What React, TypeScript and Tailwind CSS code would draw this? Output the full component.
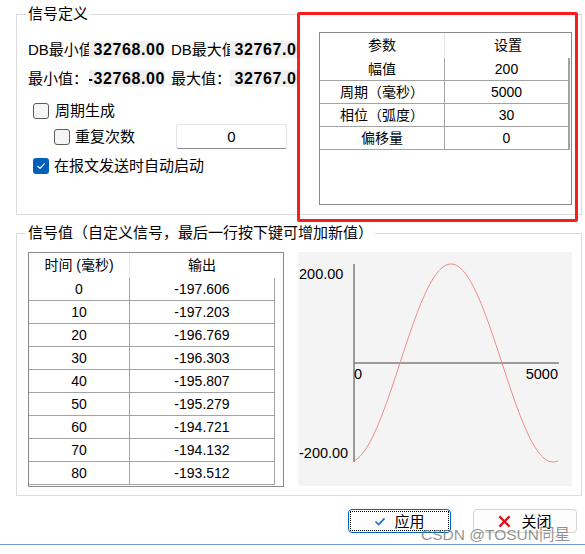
import React from 'react';

const paramRows = [
  ['幅值', '200'],
  ['周期（毫秒）', '5000'],
  ['相位（弧度）', '30'],
  ['偏移量', '0'],
];

const signalRows = [
  ['0', '-197.606'],
  ['10', '-197.203'],
  ['20', '-196.769'],
  ['30', '-196.303'],
  ['40', '-195.807'],
  ['50', '-195.279'],
  ['60', '-194.721'],
  ['70', '-194.132'],
  ['80', '-193.512'],
];

function Checkbox({ checked }: { checked?: boolean }) {
  if (checked) {
    return (
      <span className="flex h-4 w-4 shrink-0 items-center justify-center rounded-[3px] bg-[#005fb8]">
        <svg viewBox="0 0 16 16" className="h-4 w-4">
          <path d="M4.8 8.4 L7 10.4 L11.2 5.8" fill="none" stroke="white" strokeWidth="1.2" strokeLinecap="round" strokeLinejoin="round" />
        </svg>
      </span>
    );
  }
  return <span className="h-4 w-4 shrink-0 rounded-[3px] border border-[#5c5c5c] bg-[#f5f5f5]" />;
}

function ValueBox({ value }: { value: string }) {
  return (
    <div className="flex h-[17px] w-[76px] shrink-0 items-center justify-end overflow-hidden whitespace-nowrap bg-[#f0f0f0] text-[16px] font-bold leading-none tracking-[0.6px] text-black">
      {value}
    </div>
  );
}

function Label({ text, w }: { text: string; w: string }) {
  return <div className={`${w} shrink-0 overflow-hidden whitespace-nowrap text-[15px] leading-[17px]`}>{text}</div>;
}

function Chart() {
  // 5000 ms across ~204 px, amplitude 200 -> 99 px
  const pts: string[] = [];
  for (let i = 0; i <= 204; i++) {
    const v = -200 * Math.cos((2 * Math.PI * i) / 204 + 0.155);
    pts.push(`${i === 0 ? 'M' : 'L'}${(56 + i).toFixed(1)} ${(111 - v * 0.495).toFixed(2)}`);
  }
  return (
    <div className="h-[234px] w-[274px] shrink-0 bg-[#f4f4f4]">
      <svg width="274" height="234" viewBox="0 0 274 234" className="block">
        <line x1="56" y1="12" x2="56" y2="210" stroke="#7d7d7d" strokeWidth="1.5" />
        <line x1="56" y1="111" x2="261" y2="111" stroke="#7d7d7d" strokeWidth="1.5" />
        <path d={pts.join(' ')} fill="none" stroke="#f28a8a" strokeWidth="1" />
        <text x="1" y="27" fontSize="14.5" fontFamily="Liberation Sans, sans-serif" fill="#000">200.00</text>
        <text x="1" y="206" fontSize="14.5" fontFamily="Liberation Sans, sans-serif" fill="#000">-200.00</text>
        <text x="56" y="127" fontSize="14.5" fontFamily="Liberation Sans, sans-serif" fill="#000">0</text>
        <text x="260" y="127" fontSize="14.5" textAnchor="end" fontFamily="Liberation Sans, sans-serif" fill="#000">5000</text>
      </svg>
    </div>
  );
}

export default function App() {
  return (
    <div className="relative h-[554px] w-[585px] overflow-hidden bg-white pt-[6px] font-['Liberation_Sans','Noto_Sans_CJK_SC',sans-serif] text-black">
      {/* 信号定义 */}
      <fieldset className="ml-[16px] h-[209px] w-[566px] border border-[#dcdcdc]">
        <legend className="ml-[9px] px-[2px] text-[15px] leading-[16px]">信号定义</legend>
        <div className="flex">
          <div className="w-[283px] shrink-0 overflow-hidden pl-[11px]">
            <div className="mt-[19px] flex items-center">
              <Label text="DB最小值" w="w-[61px]" />
              <ValueBox value="32768.00" />
              <div className="w-[6px] shrink-0" />
              <Label text="DB最大值" w="w-[59px]" />
              <ValueBox value="32767.00" />
            </div>
            <div className="mt-[12px] flex items-center">
              <Label text="最小值：" w="w-[61px]" />
              <ValueBox value="-32768.00" />
              <div className="w-[6px] shrink-0" />
              <Label text="最大值：" w="w-[59px]" />
              <ValueBox value="32767.00" />
            </div>
            <div className="ml-[5px] mt-[16px] flex items-center gap-[6px] text-[15px] leading-4">
              <Checkbox />
              <span>周期生成</span>
            </div>
            <div className="ml-[26px] mt-[5px] flex items-center gap-[5px] text-[15px] leading-4">
              <Checkbox />
              <span className="w-[96px] shrink-0">重复次数</span>
              <div className="flex h-[25px] w-[111px] shrink-0 items-center justify-center rounded-[3px] border border-[#e3e3e3] border-b-[#8a8a8a] bg-white text-[15px]">
                0
              </div>
            </div>
            <div className="ml-[5px] mt-[9px] flex items-center gap-[5px] text-[15px] leading-4">
              <Checkbox checked />
              <span>在报文发送时自动启动</span>
            </div>
          </div>

          <div className="ml-[19px] mt-[10px] h-[173px] w-[253px] shrink-0 border border-[#8a8a8a] text-[14px]">
            <div className="flex h-[25px] items-center">
              <div className="flex h-full w-[125px] items-center justify-center border-r border-[#e4e4e4]">参数</div>
              <div className="flex h-full flex-1 items-center justify-center">设置</div>
            </div>
            {paramRows.map(([k, v]) => (
              <div key={k} className="flex h-[23px] w-[250px] border-b border-[#a3a3a3]">
                <div className="flex w-[125px] items-center justify-center border-r border-[#a3a3a3]">{k}</div>
                <div className="flex w-[125px] items-center justify-center border-r-2 border-[#a3a3a3]">{v}</div>
              </div>
            ))}
          </div>
        </div>
      </fieldset>

      {/* 信号值 */}
      <fieldset className="ml-[16px] mt-[10px] h-[271px] w-[566px] border border-[#dcdcdc]">
        <legend className="ml-[9px] px-[2px] text-[15px] leading-[16px]">信号值（自定义信号，最后一行按下键可增加新值）</legend>
        <div className="flex gap-[14px] pl-[11px] pt-[11px]">
          <div className="h-[235px] w-[256px] shrink-0 border border-[#8a8a8a] text-[14px]">
            <div className="flex h-[25px] items-center">
              <div className="flex h-full w-[101px] items-center justify-center border-r border-[#e4e4e4]">时间 (毫秒)</div>
              <div className="flex h-full w-[144px] items-center justify-center">输出</div>
            </div>
            {signalRows.map(([t, v]) => (
              <div key={t} className="flex h-[23px] w-[246px] border-b border-[#a3a3a3]">
                <div className="flex w-[101px] items-center justify-center border-r border-[#a3a3a3]">{t}</div>
                <div className="flex w-[145px] items-center justify-center border-r border-[#a3a3a3]">{v}</div>
              </div>
            ))}
          </div>
          <Chart />
        </div>
      </fieldset>

      {/* buttons */}
      <div className="mt-[13px] flex justify-end gap-[22px] pr-[8px]">
        <button className="relative flex h-[24px] w-[103px] items-center justify-center gap-[8px] rounded-[4px] border border-[#0067c0] bg-[#fdfdfd] text-[15px] leading-none">
          <span className="pointer-events-none absolute inset-[1px] border border-dotted border-black" />
          <svg viewBox="0 0 12 10" className="h-[9px] w-[12px]">
            <path d="M1 5 L4.5 8.5 L11 1.5" fill="none" stroke="#1a73cf" strokeWidth="1.8" />
          </svg>
          <span>应用</span>
        </button>
        <button className="flex h-[24px] w-[104px] items-center justify-center gap-[10px] rounded-[4px] border border-[#d4d4d4] bg-[#fdfdfd] text-[15px] leading-none">
          <svg viewBox="0 0 14 14" className="h-[13px] w-[13px]">
            <path d="M1.5 1.5 L12.5 12.5 M12.5 1.5 L1.5 12.5" fill="none" stroke="#e0101c" strokeWidth="2.4" />
          </svg>
          <span>关闭</span>
        </button>
      </div>

      <div className="mt-[11px] h-[1px] w-full bg-[#6b9ad6]" />

      {/* annotation */}
      <div className="pointer-events-none absolute left-[297px] top-[12px] h-[210px] w-[281px] rounded-[2px] border-[3px] border-[#fb1c1c]" />
      <div className="pointer-events-none absolute left-[421px] top-[526px] whitespace-nowrap text-[15.5px] leading-[18px] text-[rgba(110,110,110,0.75)]">
        CSDN @TOSUN同星
      </div>
    </div>
  );
}
